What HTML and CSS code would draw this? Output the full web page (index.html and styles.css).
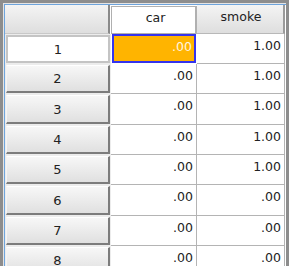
FILE: index.html
```
<!DOCTYPE html>
<html lang="en">
<head>
    <meta charset="UTF-8" />
    <title>Data sheet</title>
    <link rel="stylesheet" href="styles.css">
</head>
<body>
<div class="frame">
    <div class="inner">
        <div class="sheet">
            <div class="corner"></div>
            <div class="col-head selected">car</div>
            <div class="col-head">smoke</div>

            <div class="row-head"><span class="btn current">1</span></div>
            <div class="cell active">.00</div>
            <div class="cell">1.00</div>

            <div class="row-head"><span class="btn">2</span></div>
            <div class="cell">.00</div>
            <div class="cell">1.00</div>

            <div class="row-head"><span class="btn">3</span></div>
            <div class="cell">.00</div>
            <div class="cell">1.00</div>

            <div class="row-head"><span class="btn">4</span></div>
            <div class="cell">.00</div>
            <div class="cell">1.00</div>

            <div class="row-head"><span class="btn">5</span></div>
            <div class="cell">.00</div>
            <div class="cell">1.00</div>

            <div class="row-head"><span class="btn">6</span></div>
            <div class="cell">.00</div>
            <div class="cell">.00</div>

            <div class="row-head"><span class="btn">7</span></div>
            <div class="cell">.00</div>
            <div class="cell">.00</div>

            <div class="row-head"><span class="btn">8</span></div>
            <div class="cell">.00</div>
            <div class="cell">.00</div>
        </div>
    </div>
</div>
</body>
</html>
```

FILE: styles.css
```
html, body {
    margin: 0;
    padding: 0;
    height: 100%;
    overflow: hidden;
}

body {
    font-family: "DejaVu Sans", Verdana, sans-serif;
    background: #ffffff;
    color: #222;
}

.frame {
    height: 100%;
    box-sizing: border-box;
    border-top: 3px solid #8d8d8d;
    border-left: 3px solid #8d8d8d;
    border-right: 3px solid #8d8d8d;
    background: #e4e4e4;
    padding: 1px 0 0 1px;
}

.inner {
    height: 100%;
    box-sizing: border-box;
    border-top: 1px solid #6ea4dc;
    border-left: 1px solid #6ea4dc;
    background: #ffffff;
}

.sheet {
    display: grid;
    grid-template-columns: 106px 86px 88px;
    grid-template-rows: 29px 30px 30px 31px 30px 30px 31px 30px 30px;
}

.corner {
    background: linear-gradient(#f4f4f4, #dedede);
    border-right: 2px solid #8a8a8a;
    border-bottom: 1px solid #c8c8c8;
    box-sizing: border-box;
    margin-right: 1px;
}

.col-head {
    font-size: 12.5px;
    text-align: center;
    padding: 4px 0 0 2px;
    box-sizing: border-box;
    background: linear-gradient(#f4f4f4, #dedede);
    border-right: 2px solid #9a9a9a;
    border-bottom: 1px solid #b8b8b8;
}

.col-head.selected {
    background: #ffffff;
    border: 1px solid #b0b0b0;
    border-right-width: 2px;
    margin-top: 1px;
    padding: 3px 0 0 4px;
}

.row-head {
    display: flex;
    padding: 1px;
    background: #ececec;
}

.btn {
    flex: 1;
    display: flex;
    align-items: center;
    justify-content: center;
    font-size: 13px;
    background: linear-gradient(#f7f7f7, #e0e0e0);
    border: 1px solid;
    border-color: #ffffff #7c7c7c #7c7c7c #f4f4f4;
    border-width: 1px 2px 2px 1px;
}

.btn.current {
    background: #ffffff;
    border: 2px solid #c4c4c4;
}

.cell {
    font-size: 12.5px;
    text-align: right;
    padding: 4px 3px 0 0;
    box-sizing: border-box;
    border-right: 1px solid #b4b4b4;
    border-bottom: 1px solid #b4b4b4;
}

.cell.active {
    background: #ffb400;
    color: #fff6e0;
    border: 2px solid #3434ee;
    padding: 3px 2px 0 0;
    margin: 0 1px 1px 1px;
}
```
